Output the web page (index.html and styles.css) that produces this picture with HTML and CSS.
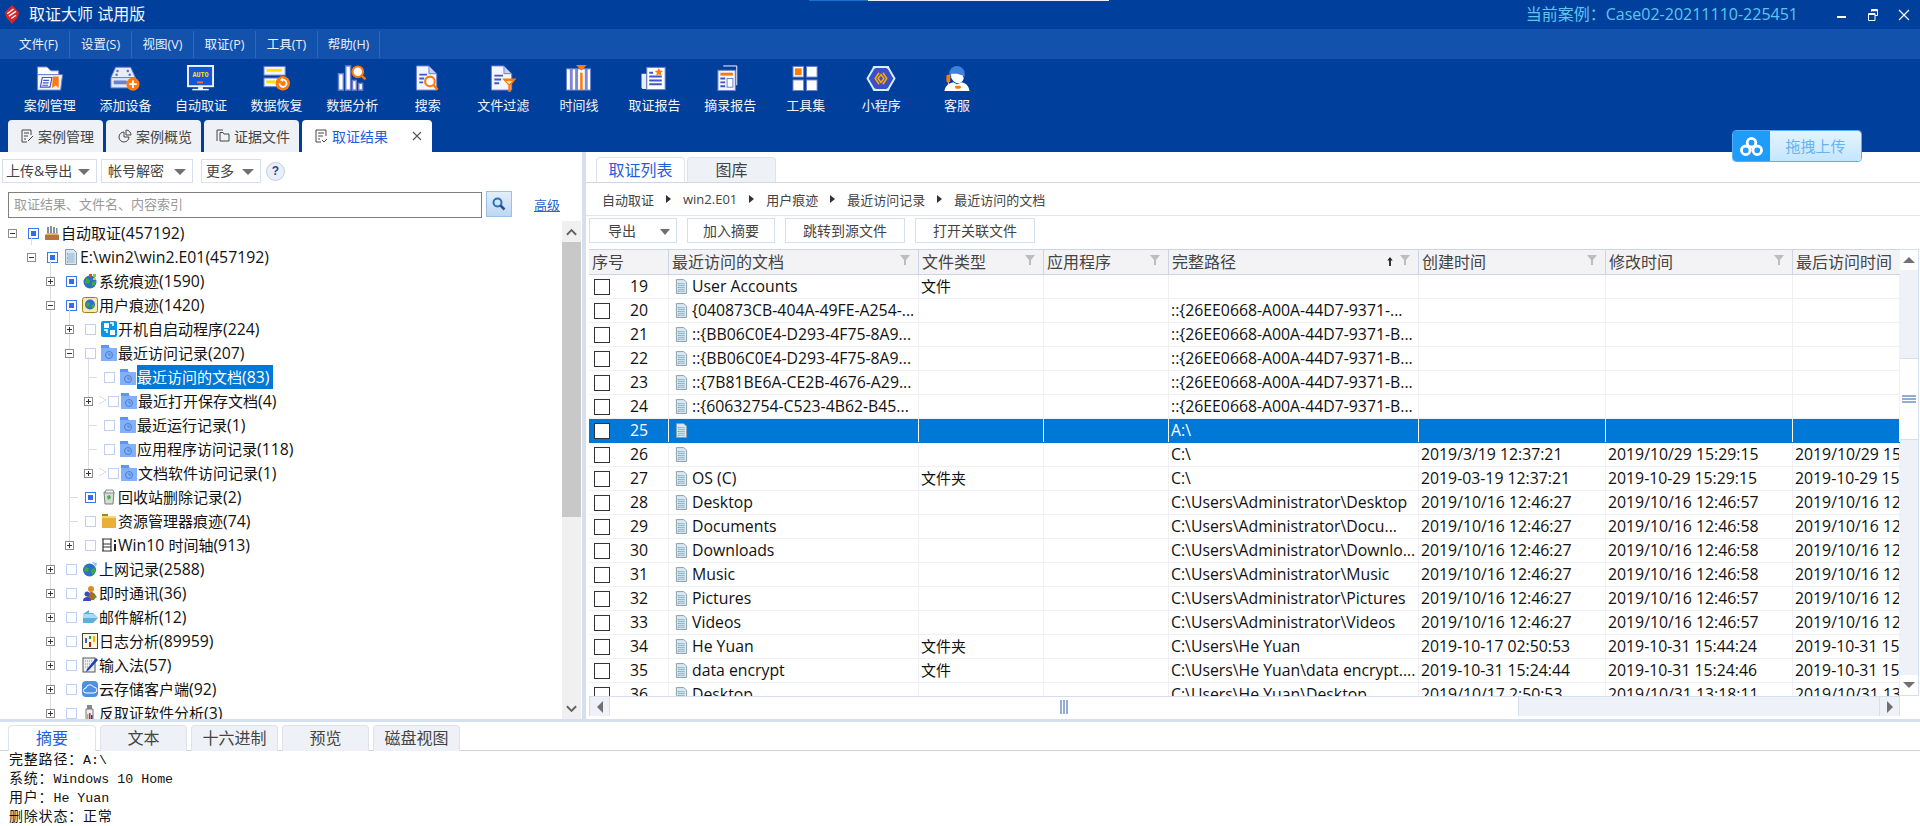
FILE: index.html
```html
<!DOCTYPE html>
<html lang="zh-CN">
<head>
<meta charset="utf-8">
<title>取证大师 试用版</title>
<link rel="stylesheet" href="styles.css">
</head>
<body>
<svg class="sprite" xmlns="http://www.w3.org/2000/svg">
  <symbol id="i-case" viewBox="0 0 30 28">
    <path d="M2 2h10l4 4h8v4H2z" fill="#fff" stroke="#6a7fd0"/>
    <path d="M2 10h26l-2 16H2z" fill="#f4f6ff" stroke="#6a7fd0"/>
    <path d="M7 13h10l-2 10H5z" fill="#fff" stroke="#3f55c8" stroke-width="1.2"/>
    <path d="M8 16h6M7.500 18.500h6M7 21h6" stroke="#3f55c8" stroke-width="1.2"/>
    <path d="M18 12h6v12l-3-3-4 3z" fill="#ff7a0a"/>
  </symbol>
  <symbol id="i-add" viewBox="0 0 32 28">
    <path d="M6 2h16l5 11H1z" fill="#e9ecfb" stroke="#6a7fd0"/>
    <path d="M1 13h26v11H1z" fill="#dfe4fb" stroke="#6a7fd0"/>
    <rect x="4" y="16" width="14" height="4" rx="1" fill="#6a7fd0"/>
    <circle cx="8" cy="6" r="1.300" fill="#5a6fc0"/><circle cx="19" cy="6" r="1.300" fill="#5a6fc0"/><circle cx="7" cy="10" r="1.300" fill="#5a6fc0"/><circle cx="21" cy="10" r="1.300" fill="#5a6fc0"/>
    <circle cx="24.500" cy="20" r="7" fill="#ff7a0a"/>
    <path d="M24.500 16v8M20.500 20h8" stroke="#fff" stroke-width="2"/>
  </symbol>
  <symbol id="i-auto" viewBox="0 0 30 28">
    <rect x="1.500" y="1" width="26" height="21" fill="#1555d8" stroke="#f2f4ff" stroke-width="2"/>
    <text x="14.500" y="12" class="auto-t">AUTO</text>
    <rect x="11" y="17" width="6" height="2" fill="#ff7a0a"/>
    <path d="M12 23h5v2h-5z" fill="#fff"/><path d="M6 25.500h17" stroke="#fff" stroke-width="1.500"/>
  </symbol>
  <symbol id="i-recover" viewBox="0 0 30 28">
    <rect x="1.500" y="1.500" width="22" height="9" fill="#f4f6ff" stroke="#6a7fd0"/>
    <rect x="4" y="4" width="16" height="3" fill="#ffe100"/>
    <rect x="1.500" y="13.500" width="22" height="9" fill="#f4f6ff" stroke="#6a7fd0"/>
    <rect x="4" y="16" width="9" height="3" fill="#ffe100"/>
    <circle cx="21" cy="19" r="7.500" fill="#ff7a0a"/>
    <path d="M17.500 19a3.700 3.700 0 1 0 2-3.300" fill="none" stroke="#fff" stroke-width="1.800"/>
    <path d="M21 13l-3 2.600 3 2z" fill="#fff"/>
  </symbol>
  <symbol id="i-analyze" viewBox="0 0 30 28">
    <rect x="1" y="9" width="5" height="17" fill="#fff" stroke="#6a7fd0" stroke-width="1.500"/>
    <rect x="8.500" y="1" width="5" height="25" fill="#fff" stroke="#6a7fd0" stroke-width="1.500"/>
    <rect x="15.500" y="16" width="4" height="10" fill="#fff" stroke="#6a7fd0" stroke-width="1.500"/>
    <rect x="22" y="19" width="4" height="7" fill="#fff" stroke="#6a7fd0" stroke-width="1.500"/>
    <circle cx="21" cy="7" r="5.500" fill="#fff" stroke="#ff7a0a" stroke-width="2.200"/>
    <path d="M25 11l4 4" stroke="#ff7a0a" stroke-width="2.500"/>
  </symbol>
  <symbol id="i-search" viewBox="0 0 30 28">
    <path d="M3 1h13l8 8v17H3z" fill="#f4f6ff" stroke="#6a7fd0"/>
    <path d="M16 1v8h8z" fill="#c8d0f5" stroke="#6a7fd0"/>
    <path d="M6 10h8M6 14h5M6 18h4" stroke="#3f55c8" stroke-width="2"/>
    <circle cx="17" cy="17" r="5" fill="#fff" stroke="#ff7a0a" stroke-width="2.200"/>
    <path d="M21 21l4 4.500" stroke="#ff7a0a" stroke-width="2.500"/>
  </symbol>
  <symbol id="i-filter" viewBox="0 0 30 28">
    <path d="M3 1h13l8 8v17H3z" fill="#f4f6ff" stroke="#6a7fd0"/>
    <path d="M16 1v8h8z" fill="#c8d0f5" stroke="#6a7fd0"/>
    <path d="M6 11h9M6 15h7M6 19h5" stroke="#3f55c8" stroke-width="2"/>
    <path d="M14 14h15l-6 7v7h-2.500v-7z" fill="#ff7a0a"/>
    <path d="M18 16.500h7l-3.500 3.500z" fill="#ffd9b0"/>
  </symbol>
  <symbol id="i-time" viewBox="0 0 30 28">
    <rect x="2" y="4" width="25" height="22" fill="#fff" stroke="#6a7fd0"/>
    <path d="M7 4v22M12.500 4v22M22.500 4v22" stroke="#7a88d8" stroke-width="3"/>
    <path d="M17.500 8v18" stroke="#ff7a0a" stroke-width="2.600"/>
    <path d="M12 0h11l-5.500 6z" fill="#ff7a0a"/>
  </symbol>
  <symbol id="i-report" viewBox="0 0 30 28">
    <path d="M1 9h5v16H3a2 2 0 0 1-2-2z" fill="#e9ecfb"/>
    <rect x="6.500" y="2.500" width="19" height="23" fill="#fff" stroke="#6a7fd0"/>
    <path d="M9 8h4M9 12h13M9 16h13M9 20h13" stroke="#3f55c8" stroke-width="2"/>
    <path d="M19 3l1.300 2.800 3 .3-2.300 2 .7 3-2.700-1.600-2.700 1.600.7-3-2.300-2 3-.3z" fill="#ff7a0a"/>
  </symbol>
  <symbol id="i-excerpt" viewBox="0 0 30 28">
    <path d="M8 1h14v20" fill="none" stroke="#fff"/>
    <rect x="2.500" y="5.500" width="18" height="21" fill="#f4f6ff" stroke="#6a7fd0"/>
    <rect x="5" y="8" width="13" height="3" fill="#ff7a0a"/>
    <path d="M5 14h5M5 18h5M5 22h5" stroke="#3f55c8" stroke-width="2"/>
    <rect x="12" y="14" width="6" height="9" fill="#fff" stroke="#6a7fd0"/>
  </symbol>
  <symbol id="i-tools" viewBox="0 0 30 28">
    <rect x="1.500" y="1.500" width="11" height="11" fill="#fff" stroke="#6a7fd0"/>
    <rect x="3.500" y="3.500" width="7" height="7" fill="#ff7a0a"/>
    <rect x="15.500" y="1.500" width="11" height="11" fill="#fff" stroke="#6a7fd0"/>
    <rect x="1.500" y="15.500" width="11" height="11" fill="#fff" stroke="#6a7fd0"/>
    <rect x="15.500" y="15.500" width="11" height="11" fill="#fff" stroke="#6a7fd0"/>
  </symbol>
  <symbol id="i-mini" viewBox="0 0 30 28">
    <path d="M8 2h14l7 12-7 12H8L1 14z" fill="#3a4fc8" stroke="#d8f0ff" stroke-width="2"/>
    <path d="M13 8l-4 6 4 6M17 8l4 6-4 6M15 10l-3 4 3 4 3-4z" fill="none" stroke="#ffa800" stroke-width="1.600"/>
    <circle cx="8" cy="2.500" r="1.500" fill="#d8f0ff"/><circle cx="22" cy="2.500" r="1.500" fill="#d8f0ff"/><circle cx="8" cy="25.500" r="1.500" fill="#d8f0ff"/><circle cx="22" cy="25.500" r="1.500" fill="#d8f0ff"/>
  </symbol>
  <symbol id="i-service" viewBox="0 0 30 28">
    <path d="M7 9a8 8 0 0 1 16 0v3H7z" fill="#3f80d8"/>
    <path d="M9 9h6l6 2 1 3c-1 3-3 5-6 5s-6-3-7-6z" fill="#fff"/>
    <path d="M2 27c1-6 5-8 9-9l4 2 5-2c4 1 7 3 8 9z" fill="#fff"/>
    <rect x="4" y="10" width="4" height="8" rx="1.500" fill="#ff7a0a"/>
    <path d="M6 18c0 4 3 5 8 5" fill="none" stroke="#fff"/>
    <rect x="13" y="21.500" width="6" height="3" rx="1.500" fill="#ff7a0a"/>
  </symbol>
  <symbol id="t-auto" viewBox="0 0 16 16"><path d="M1 10h14v5H1z" fill="#b5743a"/><path d="M3 2h2v8H3zM6 1h2v9H6zM9 2h2v8H9zM12 3h1.500v7H12z" fill="#7f8fa0"/><path d="M1 10l2-2h10l2 2z" fill="#e0b070"/></symbol>
  <symbol id="t-doc" viewBox="0 0 14 16"><path d="M1.500 .5h8l3 3v12h-11z" fill="#d7e8f4" stroke="#8a9aa8"/><path d="M3.500 5h7M3.500 7h7M3.500 9h7M3.500 11h7M3.500 13h7" stroke="#8fb0c8"/><path d="M3 5h1M3 9h1M3 13h1" stroke="#52a052"/></symbol>
  <symbol id="t-sys" viewBox="0 0 16 16"><circle cx="8" cy="9" r="6.500" fill="#2a6fc8"/><path d="M4 5l4 2-1 4-4-1zM10 9l4-1-1 4-3 1z" fill="#3fa83f"/><path d="M7 1h3v3H7z" fill="#e04030"/><path d="M11 1h3v3h-3z" fill="#8bc34a"/><path d="M11 5h3v2h-3z" fill="#ffc107"/></symbol>
  <symbol id="t-user" viewBox="0 0 16 16"><rect x=".5" y=".5" width="15" height="15" rx="2" fill="#f7e9b0" stroke="#a08020"/><circle cx="8" cy="7.500" r="5" fill="#2a6fc8"/><path d="M5 5l3 1-1 4-3-1zM9 8l3-1v3l-2 2z" fill="#3fa83f"/></symbol>
  <symbol id="t-boot" viewBox="0 0 16 16"><rect width="16" height="16" rx="2" fill="#0a96e6"/><path d="M8 2H3v5h5zM14 9H9v5h5z" fill="#fff"/><path d="M9 2h3v3M3 9h3v3" fill="none" stroke="#fff" stroke-width="1.500"/></symbol>
  <symbol id="t-folder" viewBox="0 0 16 16"><path d="M0 0h7l2 3h7v13H0z" fill="#82b0fa"/><path d="M0 0h8v3H0z" fill="#5f95ee"/><circle cx="8" cy="10" r="3.500" fill="none" stroke="#4a7fd0"/><path d="M8 8v2h2" fill="none" stroke="#4a7fd0"/></symbol>
  <symbol id="t-bin" viewBox="0 0 16 16"><path d="M3 3h10l-1 12H4z" fill="#d8dcd8" stroke="#7a7f7a"/><path d="M5 1h7l1 3H4z" fill="#eef2ee" stroke="#8a8f8a"/><path d="M6 7l3-1 1 3-3 2z" fill="#48b048"/></symbol>
  <symbol id="t-yfolder" viewBox="0 0 16 16"><path d="M1 1h6v2H1z" fill="#a88420"/><path d="M1 3h14v12H1z" fill="#e8b038"/><path d="M1 3h14v2H1z" fill="#f6d878"/></symbol>
  <symbol id="t-line" viewBox="0 0 16 16"><path d="M1 2h10M2 2v12M10 2v12M1 14h10M2 7h8M2 10h8" fill="none" stroke="#333" stroke-width="1.200"/><path d="M13 3h2v2h-2zM13 7h2v7h-2z" fill="#222"/></symbol>
  <symbol id="t-web" viewBox="0 0 16 16"><circle cx="7.500" cy="9" r="6.500" fill="#2a6fc8"/><path d="M3 6l4 1-1 4-4-1zM9 9l4-2v4l-3 3z" fill="#3fa83f"/><path d="M10 1l5 1-1 4z" fill="#8ac8f0"/></symbol>
  <symbol id="t-im" viewBox="0 0 16 16"><circle cx="9" cy="4" r="3" fill="#e08a20"/><path d="M5 15c0-5 2-8 4-8s5 2 5 5l-2 3z" fill="#b8661a"/><circle cx="5" cy="9" r="2.500" fill="#3050c0"/><path d="M1 16c0-3 2-4 4-4s4 1 4 4z" fill="#3050c0"/><path d="M12 9l3 3-3 2z" fill="#48a048"/></symbol>
  <symbol id="t-mail" viewBox="0 0 16 16"><path d="M1 5l6-4v3h4l5 5-5 5H1z" fill="#5cb0dc"/><path d="M1 5h10l5 4H1z" fill="#a8daf0"/></symbol>
  <symbol id="t-log" viewBox="0 0 16 16"><rect x=".5" y=".5" width="15" height="15" fill="#fff8d8" stroke="#444"/><path d="M3 5h2v5H3z" fill="#3060e0"/><path d="M7 3h2v3H7z" fill="#20a040"/><path d="M11 3h2v6h-2z" fill="#ffb000"/><path d="M7 9h2v5H7z" fill="#c02020"/></symbol>
  <symbol id="t-pen" viewBox="0 0 16 16"><rect x="1" y="1" width="12" height="14" fill="#eef0f4" stroke="#555"/><path d="M3 4h7M3 7h7M3 10h4" stroke="#888" stroke-dasharray="1 1"/><path d="M14 1l2 2-9 10-3 2 1-3z" fill="#2040b0"/></symbol>
  <symbol id="t-cloud" viewBox="0 0 16 16"><rect width="16" height="16" rx="4" fill="#4f8fe0"/><path d="M4 12a2.500 2.500 0 0 1 0-5 4 4 0 0 1 7.500-1A3 3 0 0 1 12 12z" fill="none" stroke="#fff"/></symbol>
  <symbol id="t-anti" viewBox="0 0 16 16"><path d="M5 0h5v4H5z" fill="#888"/><path d="M4 4h7v12H4z" fill="#eee" stroke="#777"/><path d="M5 9h1.500v7H5z" fill="#e0a020"/><path d="M7 8h1.500v8H7z" fill="#c02080"/><path d="M9 10h1.500v6H9z" fill="#2040b0"/></symbol>
  <symbol id="funnel" viewBox="0 0 10 10"><path d="M0 0h10L6 5v5H4V5z" fill="#bdbdbd"/></symbol>
</svg>

<div class="strip"><span class="strip-b"></span><span class="strip-w"></span></div>

<header class="titlebar">
  <svg class="logo" viewBox="0 0 18 24"><path d="M9 0l9 9-2 7-7 8-7-8-2-7z" fill="#d7262a"/><path d="M3 11l8-6M5 14l9-6M8 17l6-4" stroke="#fff" stroke-width="1.700"/></svg>
  <span class="app-name">取证大师 试用版</span>
  <span class="case-name">当前案例：Case02-20211110-225451</span>
  <span class="winbtn"><svg viewBox="0 0 12 12"><path d="M1 8h9" stroke="#fff" stroke-width="2"/></svg></span>
  <span class="winbtn"><svg viewBox="0 0 12 12"><path d="M4.500 2.500V.5h6v6H8M1.500 4.500h6.500v7H1.500zM1.500 5.500H8" fill="none" stroke="#fff"/><path d="M4.500 1.500h6" stroke="#fff" stroke-width="1.500"/></svg></span>
  <span class="winbtn"><svg viewBox="0 0 12 12"><path d="M1 1l10 10M11 1L1 11" stroke="#fff" stroke-width="1.200"/></svg></span>
</header>

<nav class="menubar">
  <span class="menu">文件(F)</span><span class="menu">设置(S)</span><span class="menu">视图(V)</span><span class="menu">取证(P)</span><span class="menu">工具(T)</span><span class="menu">帮助(H)</span>
</nav>

<section class="ribbon">
  <div class="tools">
    <div class="tool"><svg><use href="#i-case"/></svg><span>案例管理</span></div>
    <div class="tool"><svg><use href="#i-add"/></svg><span>添加设备</span></div>
    <div class="tool"><svg><use href="#i-auto"/></svg><span>自动取证</span></div>
    <div class="tool"><svg><use href="#i-recover"/></svg><span>数据恢复</span></div>
    <div class="tool"><svg><use href="#i-analyze"/></svg><span>数据分析</span></div>
    <div class="tool"><svg><use href="#i-search"/></svg><span>搜索</span></div>
    <div class="tool"><svg><use href="#i-filter"/></svg><span>文件过滤</span></div>
    <div class="tool"><svg><use href="#i-time"/></svg><span>时间线</span></div>
    <div class="tool"><svg><use href="#i-report"/></svg><span>取证报告</span></div>
    <div class="tool"><svg><use href="#i-excerpt"/></svg><span>摘录报告</span></div>
    <div class="tool"><svg><use href="#i-tools"/></svg><span>工具集</span></div>
    <div class="tool"><svg><use href="#i-mini"/></svg><span>小程序</span></div>
    <div class="tool"><svg><use href="#i-service"/></svg><span>客服</span></div>
  </div>
  <div class="maintabs">
    <div class="mtab"><svg viewBox="0 0 14 14"><path d="M11 6V1H2v12h5M4 4h5M4 7h4M4 10h2M8 12l5-5" fill="none" stroke="#444"/></svg>案例管理</div>
    <div class="mtab"><svg viewBox="0 0 14 14"><path d="M6 3a5 5 0 1 0 5 5H6z" fill="none" stroke="#444"/><path d="M8 1a5 5 0 0 1 5 5H8z" fill="none" stroke="#444"/></svg>案例概览</div>
    <div class="mtab"><svg viewBox="0 0 14 14"><path d="M1 3V1h6M1 3v9M4 4v-.500h3l1 1.500h5v7H4z" fill="none" stroke="#444"/></svg>证据文件</div>
    <div class="mtab active"><svg viewBox="0 0 14 14"><path d="M12 7V1H2v12h5M4 4h6M4 7h5M4 10h2M8 11l2 2 3-3" fill="none" stroke="#444"/></svg>取证结果<svg class="x" viewBox="0 0 10 10"><path d="M1 1l8 8M9 1L1 9" stroke="#555" stroke-width="1.100"/></svg></div>
  </div>
</section>

<aside class="upload"><span class="up-ico"><svg viewBox="0 0 26 22"><g fill="none" stroke="#fff" stroke-width="3"><circle cx="13" cy="7" r="4.500"/><circle cx="7" cy="15" r="4.500"/><circle cx="19" cy="15" r="4.500"/></g></svg></span><span class="up-txt">拖拽上传</span></aside>

<main class="work">
  <section class="left">
    <div class="ltools">
      <span class="dd w95">上传&amp;导出<i class="tri"></i></span>
      <span class="dd w92">帐号解密<i class="tri"></i></span>
      <span class="dd w60">更多<i class="tri"></i></span>
      <span class="help">?</span>
    </div>
    <div class="searchrow">
      <span class="searchbox">取证结果、文件名、内容索引</span>
      <span class="searchbtn"><svg viewBox="0 0 14 14"><circle cx="5.500" cy="5.500" r="4" fill="none" stroke="#2a6fb8" stroke-width="2"/><path d="M8.500 8.500l4 4" stroke="#2a4f88" stroke-width="2.500"/></svg></span>
      <a class="adv">高级</a>
    </div>
    <div class="treewrap">
      <div class="tree">
        <div class="node l0"><i class="exp minus"></i><i class="cb on"></i><svg class="ti"><use href="#t-auto"/></svg><span class="tl">自动取证<span class="n">(457192)</span></span></div>
        <div class="kids k1">
          <div class="node l1"><i class="exp minus"></i><i class="cb on"></i><svg class="ti"><use href="#t-doc"/></svg><span class="tl n">E:\win2\win2.E01(457192)</span></div>
          <div class="kids k2">
            <div class="node l2"><i class="exp plus"></i><i class="cb on"></i><svg class="ti"><use href="#t-sys"/></svg><span class="tl">系统痕迹<span class="n">(1590)</span></span></div>
            <div class="node l2"><i class="exp minus"></i><i class="cb on"></i><svg class="ti"><use href="#t-user"/></svg><span class="tl">用户痕迹<span class="n">(1420)</span></span></div>
            <div class="kids k3">
              <div class="node l3"><i class="exp plus"></i><i class="cb"></i><svg class="ti"><use href="#t-boot"/></svg><span class="tl">开机自启动程序<span class="n">(224)</span></span></div>
              <div class="node l3"><i class="exp minus"></i><i class="cb"></i><svg class="ti"><use href="#t-folder"/></svg><span class="tl">最近访问记录<span class="n">(207)</span></span></div>
              <div class="kids k4">
                <div class="node l4"><i class="exp none"></i><i class="cb"></i><svg class="ti"><use href="#t-folder"/></svg><span class="tl sel">最近访问的文档<span class="n">(83)</span></span></div>
                <div class="node l4"><i class="exp plus mk"></i><i class="arrow"></i><i class="cb tight"></i><svg class="ti"><use href="#t-folder"/></svg><span class="tl">最近打开保存文档<span class="n">(4)</span></span></div>
                <div class="node l4"><i class="exp none"></i><i class="cb"></i><svg class="ti"><use href="#t-folder"/></svg><span class="tl">最近运行记录<span class="n">(1)</span></span></div>
                <div class="node l4"><i class="exp none"></i><i class="cb"></i><svg class="ti"><use href="#t-folder"/></svg><span class="tl">应用程序访问记录<span class="n">(118)</span></span></div>
                <div class="node l4"><i class="exp plus mk"></i><i class="arrow"></i><i class="cb tight"></i><svg class="ti"><use href="#t-folder"/></svg><span class="tl">文档软件访问记录<span class="n">(1)</span></span></div>
              </div>
              <div class="node l3"><i class="exp none"></i><i class="cb on"></i><svg class="ti"><use href="#t-bin"/></svg><span class="tl">回收站删除记录<span class="n">(2)</span></span></div>
              <div class="node l3"><i class="exp none"></i><i class="cb"></i><svg class="ti"><use href="#t-yfolder"/></svg><span class="tl">资源管理器痕迹<span class="n">(74)</span></span></div>
              <div class="node l3"><i class="exp plus"></i><i class="cb"></i><svg class="ti"><use href="#t-line"/></svg><span class="tl"><span class="n">Win10 </span>时间轴<span class="n">(913)</span></span></div>
            </div>
            <div class="node l2"><i class="exp plus"></i><i class="cb"></i><svg class="ti"><use href="#t-web"/></svg><span class="tl">上网记录<span class="n">(2588)</span></span></div>
            <div class="node l2"><i class="exp plus"></i><i class="cb"></i><svg class="ti"><use href="#t-im"/></svg><span class="tl">即时通讯<span class="n">(36)</span></span></div>
            <div class="node l2"><i class="exp plus"></i><i class="cb"></i><svg class="ti"><use href="#t-mail"/></svg><span class="tl">邮件解析<span class="n">(12)</span></span></div>
            <div class="node l2"><i class="exp plus"></i><i class="cb"></i><svg class="ti"><use href="#t-log"/></svg><span class="tl">日志分析<span class="n">(89959)</span></span></div>
            <div class="node l2"><i class="exp plus"></i><i class="cb"></i><svg class="ti"><use href="#t-pen"/></svg><span class="tl">输入法<span class="n">(57)</span></span></div>
            <div class="node l2"><i class="exp plus"></i><i class="cb"></i><svg class="ti"><use href="#t-cloud"/></svg><span class="tl">云存储客户端<span class="n">(92)</span></span></div>
            <div class="node l2"><i class="exp plus"></i><i class="cb"></i><svg class="ti"><use href="#t-anti"/></svg><span class="tl">反取证软件分析<span class="n">(3)</span></span></div>
          </div>
        </div>
      </div>
      <div class="tscroll">
        <span class="tbtn"><svg viewBox="0 0 12 8"><path d="M1 7l5-5 5 5" fill="none" stroke="#606060" stroke-width="2"/></svg></span>
        <span class="tthumb"></span>
        <span class="ttrack"></span>
        <span class="tbtn"><svg viewBox="0 0 12 8"><path d="M1 1l5 5 5-5" fill="none" stroke="#606060" stroke-width="2"/></svg></span>
      </div>
    </div>
  </section>

  <section class="right">
    <div class="rtabs"><span class="rtab active">取证列表</span><span class="rtab">图库</span></div>
    <div class="crumbs"><span>自动取证</span><i></i><span>win2.E01</span><i></i><span>用户痕迹</span><i></i><span>最近访问记录</span><i></i><span>最近访问的文档</span></div>
    <div class="actions">
      <span class="act a88 split">导出<i class="tri"></i></span>
      <span class="act a88">加入摘要</span>
      <span class="act a120">跳转到源文件</span>
      <span class="act a120">打开关联文件</span>
    </div>
    <div class="tablebox">
      <div class="tmain">
        <div class="grid head">
          <span class="hc">序号</span>
          <span class="hc">最近访问的文档<svg class="fn"><use href="#funnel"/></svg></span>
          <span class="hc">文件类型<svg class="fn"><use href="#funnel"/></svg></span>
          <span class="hc">应用程序<svg class="fn"><use href="#funnel"/></svg></span>
          <span class="hc">完整路径<svg class="sort" viewBox="0 0 6 10"><path d="M3 0l3 4H4v6H2V4H0z" fill="#222"/></svg><svg class="fn"><use href="#funnel"/></svg></span>
          <span class="hc">创建时间<svg class="fn"><use href="#funnel"/></svg></span>
          <span class="hc">修改时间<svg class="fn"><use href="#funnel"/></svg></span>
          <span class="hc last">最后访问时间</span>
        </div>
        <div class="rows">
          <div class="grid row"><span class="c idx"><i class="box"></i>19</span><span class="c nm"><svg class="di"><use href="#t-doc"/></svg>User Accounts</span><span class="c cn">文件</span><span class="c"></span><span class="c"></span><span class="c"></span><span class="c"></span><span class="c"></span></div>
          <div class="grid row"><span class="c idx"><i class="box"></i>20</span><span class="c nm"><svg class="di"><use href="#t-doc"/></svg>{040873CB-404A-49FE-A254-...</span><span class="c"></span><span class="c"></span><span class="c">::{26EE0668-A00A-44D7-9371-...</span><span class="c"></span><span class="c"></span><span class="c"></span></div>
          <div class="grid row"><span class="c idx"><i class="box"></i>21</span><span class="c nm"><svg class="di"><use href="#t-doc"/></svg>::{BB06C0E4-D293-4F75-8A9...</span><span class="c"></span><span class="c"></span><span class="c">::{26EE0668-A00A-44D7-9371-B...</span><span class="c"></span><span class="c"></span><span class="c"></span></div>
          <div class="grid row"><span class="c idx"><i class="box"></i>22</span><span class="c nm"><svg class="di"><use href="#t-doc"/></svg>::{BB06C0E4-D293-4F75-8A9...</span><span class="c"></span><span class="c"></span><span class="c">::{26EE0668-A00A-44D7-9371-B...</span><span class="c"></span><span class="c"></span><span class="c"></span></div>
          <div class="grid row"><span class="c idx"><i class="box"></i>23</span><span class="c nm"><svg class="di"><use href="#t-doc"/></svg>::{7B81BE6A-CE2B-4676-A29...</span><span class="c"></span><span class="c"></span><span class="c">::{26EE0668-A00A-44D7-9371-B...</span><span class="c"></span><span class="c"></span><span class="c"></span></div>
          <div class="grid row"><span class="c idx"><i class="box"></i>24</span><span class="c nm"><svg class="di"><use href="#t-doc"/></svg>::{60632754-C523-4B62-B45...</span><span class="c"></span><span class="c"></span><span class="c">::{26EE0668-A00A-44D7-9371-B...</span><span class="c"></span><span class="c"></span><span class="c"></span></div>
          <div class="grid row selected"><span class="c idx"><i class="box"></i>25</span><span class="c nm"><svg class="di"><use href="#t-doc"/></svg></span><span class="c"></span><span class="c"></span><span class="c">A:\</span><span class="c"></span><span class="c"></span><span class="c"></span></div>
          <div class="grid row"><span class="c idx"><i class="box"></i>26</span><span class="c nm"><svg class="di"><use href="#t-doc"/></svg></span><span class="c"></span><span class="c"></span><span class="c">C:\</span><span class="c">2019/3/19 12:37:21</span><span class="c">2019/10/29 15:29:15</span><span class="c">2019/10/29 15:29:15</span></div>
          <div class="grid row"><span class="c idx"><i class="box"></i>27</span><span class="c nm"><svg class="di"><use href="#t-doc"/></svg>OS (C)</span><span class="c cn">文件夹</span><span class="c"></span><span class="c">C:\</span><span class="c">2019-03-19 12:37:21</span><span class="c">2019-10-29 15:29:15</span><span class="c">2019-10-29 15:29:15</span></div>
          <div class="grid row"><span class="c idx"><i class="box"></i>28</span><span class="c nm"><svg class="di"><use href="#t-doc"/></svg>Desktop</span><span class="c"></span><span class="c"></span><span class="c">C:\Users\Administrator\Desktop</span><span class="c">2019/10/16 12:46:27</span><span class="c">2019/10/16 12:46:57</span><span class="c">2019/10/16 12:46:57</span></div>
          <div class="grid row"><span class="c idx"><i class="box"></i>29</span><span class="c nm"><svg class="di"><use href="#t-doc"/></svg>Documents</span><span class="c"></span><span class="c"></span><span class="c">C:\Users\Administrator\Docu...</span><span class="c">2019/10/16 12:46:27</span><span class="c">2019/10/16 12:46:58</span><span class="c">2019/10/16 12:46:58</span></div>
          <div class="grid row"><span class="c idx"><i class="box"></i>30</span><span class="c nm"><svg class="di"><use href="#t-doc"/></svg>Downloads</span><span class="c"></span><span class="c"></span><span class="c">C:\Users\Administrator\Downlo...</span><span class="c">2019/10/16 12:46:27</span><span class="c">2019/10/16 12:46:58</span><span class="c">2019/10/16 12:46:58</span></div>
          <div class="grid row"><span class="c idx"><i class="box"></i>31</span><span class="c nm"><svg class="di"><use href="#t-doc"/></svg>Music</span><span class="c"></span><span class="c"></span><span class="c">C:\Users\Administrator\Music</span><span class="c">2019/10/16 12:46:27</span><span class="c">2019/10/16 12:46:58</span><span class="c">2019/10/16 12:46:58</span></div>
          <div class="grid row"><span class="c idx"><i class="box"></i>32</span><span class="c nm"><svg class="di"><use href="#t-doc"/></svg>Pictures</span><span class="c"></span><span class="c"></span><span class="c">C:\Users\Administrator\Pictures</span><span class="c">2019/10/16 12:46:27</span><span class="c">2019/10/16 12:46:57</span><span class="c">2019/10/16 12:46:57</span></div>
          <div class="grid row"><span class="c idx"><i class="box"></i>33</span><span class="c nm"><svg class="di"><use href="#t-doc"/></svg>Videos</span><span class="c"></span><span class="c"></span><span class="c">C:\Users\Administrator\Videos</span><span class="c">2019/10/16 12:46:27</span><span class="c">2019/10/16 12:46:57</span><span class="c">2019/10/16 12:46:57</span></div>
          <div class="grid row"><span class="c idx"><i class="box"></i>34</span><span class="c nm"><svg class="di"><use href="#t-doc"/></svg>He Yuan</span><span class="c cn">文件夹</span><span class="c"></span><span class="c">C:\Users\He Yuan</span><span class="c">2019-10-17 02:50:53</span><span class="c">2019-10-31 15:44:24</span><span class="c">2019-10-31 15:44:24</span></div>
          <div class="grid row"><span class="c idx"><i class="box"></i>35</span><span class="c nm"><svg class="di"><use href="#t-doc"/></svg>data encrypt</span><span class="c cn">文件</span><span class="c"></span><span class="c">C:\Users\He Yuan\data encrypt....</span><span class="c">2019-10-31 15:24:44</span><span class="c">2019-10-31 15:24:46</span><span class="c">2019-10-31 15:24:46</span></div>
          <div class="grid row"><span class="c idx"><i class="box"></i>36</span><span class="c nm"><svg class="di"><use href="#t-doc"/></svg>Desktop</span><span class="c"></span><span class="c"></span><span class="c">C:\Users\He Yuan\Desktop</span><span class="c">2019/10/17 2:50:53</span><span class="c">2019/10/31 13:18:11</span><span class="c">2019/10/31 13:18:11</span></div>
        </div>
        <div class="hscroll">
          <span class="sbtn"><svg viewBox="0 0 8 12"><path d="M7 0v12L1 6z" fill="#707070"/></svg></span>
          <span class="hthumb"><svg viewBox="0 0 8 14"><path d="M1 0v14M4 0v14M7 0v14" stroke="#2a5aa8"/></svg></span>
          <span class="htrack"></span>
          <span class="sbtn"><svg viewBox="0 0 8 12"><path d="M1 0v12l6-6z" fill="#707070"/></svg></span>
        </div>
      </div>
      <div class="vscroll">
        <span class="vbtn up"><svg viewBox="0 0 12 8"><path d="M0 7h12L6 1z" fill="#707070"/></svg></span>
        <span class="vtrack t1"></span>
        <span class="vthumb"><svg viewBox="0 0 14 8"><path d="M0 1h14M0 4h14M0 7h14" stroke="#2a5aa8"/></svg></span>
        <span class="vtrack t2"></span>
        <span class="vbtn"><svg viewBox="0 0 12 8"><path d="M0 1h12L6 7z" fill="#707070"/></svg></span>
      </div>
    </div>
  </section>
</main>

<section class="bottom">
  <div class="btabs"><span class="btab first active">摘要</span><span class="btab">文本</span><span class="btab">十六进制</span><span class="btab">预览</span><span class="btab">磁盘视图</span></div>
  <div class="summary">
    <p><span class="k">完整路径：</span>A:\</p>
    <p><span class="k">系统：</span>Windows 10 Home</p>
    <p><span class="k">用户：</span>He Yuan</p>
    <p><span class="k">删除状态：正常</span></p>
  </div>
</section>
</body>
</html>
```
FILE: styles.css
```css
* { box-sizing: border-box; }
html, body { margin: 0; padding: 0; height: 826px; overflow: hidden; background: #fff; }
body {
  width: 1920px;
  position: relative;
  font-family: "Open Sans", "Noto Sans CJK SC", sans-serif;
  font-size: 15px;
  color: #111;
}
i { font-style: normal; display: block; flex: none; }
svg { display: block; flex: none; }
.sprite { position: absolute; width: 0; height: 0; overflow: hidden; }

.strip { position: absolute; left: 809px; top: 0; height: 1px; display: flex; }
.strip-b { width: 59px; background: #1a6fd0; }
.strip-w { width: 241px; background: #e8eef8; }

/* title bar */
.titlebar { height: 29px; background: #00409c; display: flex; align-items: center; color: #fff; }
.logo { width: 18px; height: 19px; margin-left: 3px; }
.app-name { margin-left: 8px; font-size: 16px; color: #f4f7ff; line-height: 29px; flex: 1; }
.case-name { font-size: 16px; color: #5cc6ef; margin-right: 28px; line-height: 29px; }
.winbtn { width: 31px; display: flex; justify-content: center; }
.winbtn svg { width: 12px; height: 12px; }
.winbtn:last-child { margin-right: 1px; }

/* menu */
.menubar { height: 30px; background: #1252ac; display: flex; padding-left: 8px; align-items: center; }
.menu { width: 62px; height: 27px; line-height: 27px; font-size: 12.5px; color: #eaf1ff; text-align: center; border-right: 1px solid #2f68bb; }

/* ribbon */
.ribbon { height: 93px; background: #00409c; padding-top: 6px; }
.tools { display: flex; padding-left: 12px; height: 49px; }
.tool { width: 75.6px; display: flex; flex-direction: column; align-items: center; }
.tool svg { width: 30px; height: 27px; }
.tool span { font-size: 13px; color: #f0f5ff; line-height: 18px; margin-top: 4px; white-space: nowrap; }
.maintabs { display: flex; gap: 3px; margin: 6px 0 0 8px; }
.mtab { width: 95px; height: 32px; background: #eef1f6; border-radius: 4px 4px 0 0; color: #444; font-size: 14px; display: flex; align-items: center; padding-left: 12px; gap: 4px; }
.mtab svg { width: 14px; height: 14px; }
.mtab.active { width: 130px; background: #fff; color: #1f5fdc; }
.mtab .x { width: 10px; height: 10px; margin-left: 20px; }

/* upload float */
.upload { position: absolute; left: 1732px; top: 130px; width: 130px; height: 32px; border: 1px solid #55b0f8; border-radius: 4px; display: flex; overflow: hidden; z-index: 3; }
.up-ico { width: 37px; background: #1f9bf8; display: flex; align-items: center; justify-content: center; }
.up-ico svg { width: 25px; height: 21px; }
.up-txt { flex: 1; background: linear-gradient(#e4f4ff, #c4e6ff); color: #66b4f4; font-size: 15px; line-height: 30px; text-align: center; }

/* work */
.work { height: 567px; display: flex; }
.left { width: 582px; flex: none; display: flex; flex-direction: column; padding-top: 7px; }
.ltools { display: flex; align-items: center; height: 24px; padding-left: 2px; }
.dd { height: 24px; border: 1px solid #d5e0ef; color: #444; font-size: 14px; line-height: 22px; padding-left: 3px; position: relative; margin-right: 4px; white-space: nowrap; }
.dd.w95 { width: 95px; }
.dd.w92 { width: 92px; padding-left: 6px; margin-right: 8px; }
.dd.w60 { width: 60px; padding-left: 4px; margin-right: 5px; }
.tri { position: absolute; right: 6px; top: 9px; width: 0; height: 0; border-left: 6px solid transparent; border-right: 6px solid transparent; border-top: 6px solid #707070; }
.help { width: 19px; height: 19px; border-radius: 50%; background: #e8eff8; border: 1px solid #c0cfe2; color: #2a3f9c; font: bold 12px/17px "Liberation Sans", sans-serif; text-align: center; }
.searchrow { display: flex; align-items: flex-start; padding: 8px 0 0 8px; height: 38px; }
.searchbox { width: 474px; height: 26px; border: 1.5px solid #808080; color: #999; font-size: 13px; line-height: 23px; padding-left: 5px; margin-top: 1px; }
.searchbtn { width: 26px; height: 26px; margin-left: 4px; background: linear-gradient(#e4eefa, #bcd8f4); border: 1px solid #9cc0e4; display: flex; align-items: center; justify-content: center; }
.searchbtn svg { width: 14px; height: 14px; }
.adv { margin: 5px 0 0 22px; font-size: 13px; line-height: 18px; color: #2a62c9; text-decoration: underline; }

.treewrap { flex: 1; display: flex; min-height: 0; }
.tree { width: 562px; height: 498px; overflow: hidden; flex: none; }
.node { height: 24px; display: flex; align-items: center; position: relative; }
.l0 { padding-left: 8px; } .l1 { padding-left: 27px; } .l2 { padding-left: 46px; } .l3 { padding-left: 65px; } .l4 { padding-left: 84px; }
.exp { width: 9px; height: 9px; margin-right: 11px; position: relative; border: 1px solid #8c8c8c; background: #fff; z-index: 1; }
.exp::before { content: ""; position: absolute; left: 1px; top: 3px; width: 5px; height: 1px; background: #333; }
.exp.plus::after { content: ""; position: absolute; left: 3px; top: 1px; width: 1px; height: 5px; background: #333; }
.exp.none { border-color: transparent; background: none; }
.exp.none::before { left: 3px; top: 3px; width: 9px; height: 1px; background: #ddd; }
.exp.mk { margin-right: 6px; }
.arrow { width: 0; height: 0; border-left: 7px solid #fff; border-top: 4px solid transparent; border-bottom: 4px solid transparent; margin-right: 2px; margin-top: -3px; filter: drop-shadow(0 0 .6px #555); }
.cb { width: 11px; height: 11px; border: 1px solid #c0d0f4; background: #fff; margin-right: 5px; position: relative; }
.cb.on { border-color: #3a78ee; }
.cb.on::after { content: ""; position: absolute; left: 2px; top: 2px; width: 5px; height: 5px; background: #2f6fee; }
.cb.tight { margin-right: 2px; }
.ti { width: 16px; height: 16px; margin-right: 1px; }
.tl { line-height: 24px; white-space: nowrap; padding-right: 4px; }
.n { font-size: 15.8px; }
.tl.sel { background: #0078d7; color: #fff; }
.kids { position: relative; }
.kids::before { content: ""; position: absolute; top: -8px; bottom: 12px; width: 1px; background: #ddd; }
.k1::before { left: 31px; bottom: auto; height: 8px; }
.k2::before { left: 50px; }
.k3::before { left: 69px; }
.k4::before { left: 88px; }
.tscroll { width: 19px; height: 498px; background: #f0f0f0; display: flex; flex-direction: column; flex: none; }
.tbtn { height: 21px; display: flex; align-items: center; justify-content: center; }
.tbtn svg { width: 11px; height: 8px; }
.tthumb { height: 275px; background: #c8c8c8; }
.ttrack { flex: 1; }

/* right */
.right { flex: 1; min-width: 0; border-left: 4px solid #d5e0ef; display: flex; flex-direction: column; }
.rtabs { height: 31px; padding: 5px 0 0 10px; display: flex; gap: 2px; border-bottom: 1px solid #d0d6e4; }
.rtab { width: 89px; height: 25px; background: #eef1f6; border: 1px solid #dde3ee; border-bottom: 0; border-radius: 4px 4px 0 0; text-align: center; font-size: 16px; line-height: 24px; color: #444; }
.rtab.active { background: #fff; color: #1f5fdc; }
.crumbs { height: 33px; border-bottom: 1px solid #dfe5f0; display: flex; align-items: center; padding-left: 16px; font-size: 13px; color: #444; }
.crumbs i { width: 0; height: 0; border-left: 5px solid #333; border-top: 4.5px solid transparent; border-bottom: 4.5px solid transparent; margin: 0 12px 0 12px; }
.actions { display: flex; gap: 10px; padding: 2px 0 0 3px; height: 28px; }
.act { height: 25px; border: 1px solid #d5e0ef; font-size: 14px; line-height: 23px; color: #444; text-align: center; position: relative; }
.a88 { width: 88px; } .a120 { width: 120px; }
.split { text-align: left; padding-left: 18px; }
.split .tri { top: 10px; right: 6px; border-left-width: 5.5px; border-right-width: 5.5px; }

.tablebox { display: flex; margin: 5px 0 0 3px; height: 467px; }
.tmain { width: 1311px; flex: none; display: flex; flex-direction: column; border-bottom: 1px solid #d5e0ef; }
.grid { display: grid; grid-template-columns: 80px 250px 125px 125px 250px 187px 187px 107px; }
.head { height: 26px; background: #f3f3f5; border-top: 1px solid #ccd5e6; border-bottom: 1px solid #ccd5e6; }
.hc { position: relative; font-size: 16px; color: #444; line-height: 24px; padding-left: 3px; border-right: 1px solid #ccd5e6; white-space: nowrap; overflow: hidden; }
.hc.last { border-right: 0; }
.fn { position: absolute; right: 8px; top: 5px; width: 10px; height: 10px; }
.sort { position: absolute; right: 25px; top: 7px; width: 6px; height: 9px; }
.rows { height: 421px; overflow: hidden; flex: none; }
.row { height: 24px; border-bottom: 1px solid #eef0f4; }
.c { line-height: 23px; padding-left: 2px; border-right: 1px solid #eef0f4; white-space: nowrap; overflow: hidden; display: flex; align-items: center; font-size: 15.8px; }
.c.cn { font-size: 15px; }
.idx { padding-left: 5px; }
.box { width: 16px; height: 16px; border: 1px solid #333; background: #fff; margin-right: 20px; }
.nm { padding-left: 6px; }
.di { width: 13px; height: 15px; margin-right: 4px; }
.row.selected { background: #0078d7; color: #fff; border-bottom-color: #0078d7; }
.row.selected .c { border-right-color: #fff; }
.hscroll { height: 20px; display: flex; border-top: 1px solid #d5e0ef; background: #eef1f7; flex: none; }
.sbtn { width: 21px; display: flex; align-items: center; justify-content: center; border-right: 1px solid #d5e0ef; border-left: 1px solid #d5e0ef; }
.sbtn svg { width: 8px; height: 12px; }
.hthumb { width: 909px; background: #fff; border-right: 1px solid #d5e0ef; display: flex; align-items: center; justify-content: center; }
.hthumb svg { width: 8px; height: 14px; }
.htrack { flex: 1; }
.vscroll { width: 19px; flex: none; display: flex; flex-direction: column; background: #eef1f7; height: 447px; border: 1px solid #d5e0ef; border-left: 0; }
.vbtn { height: 20px; display: flex; align-items: center; justify-content: center; background: #fff; }
.vbtn svg { width: 12px; height: 8px; }
.t1 { height: 88px; }
.t2 { flex: 1; }
.vthumb { height: 82px; background: #fff; border-top: 1px solid #d5e0ef; border-bottom: 1px solid #d5e0ef; display: flex; align-items: center; justify-content: center; }
.vthumb svg { width: 14px; height: 8px; }

/* bottom */
.bottom { border-top: 3px solid #d5e0ef; height: 107px; overflow: hidden; }
.btabs { height: 29px; padding: 3px 0 0 8px; display: flex; gap: 4px; border-bottom: 1px solid #d0d0e0; }
.btab { width: 87px; height: 26px; background: #eef1f6; border: 1px solid #dde3ee; border-bottom: 0; border-radius: 4px 4px 0 0; text-align: center; font-size: 16px; line-height: 25px; color: #444; }
.btab.first { width: 88px; }
.btab.active { background: #fff; color: #1f5fdc; }
.summary { padding-left: 9px; font-family: "Liberation Mono", "Noto Sans CJK SC", monospace; font-size: 13.3px; line-height: 19px; color: #111; }
.summary p { margin: 0; height: 19px; }
.k { font-size: 14px; letter-spacing: .8px; }
.auto-t { font: bold 7px "Liberation Mono", monospace; fill: #ffe100; text-anchor: middle; }
```
